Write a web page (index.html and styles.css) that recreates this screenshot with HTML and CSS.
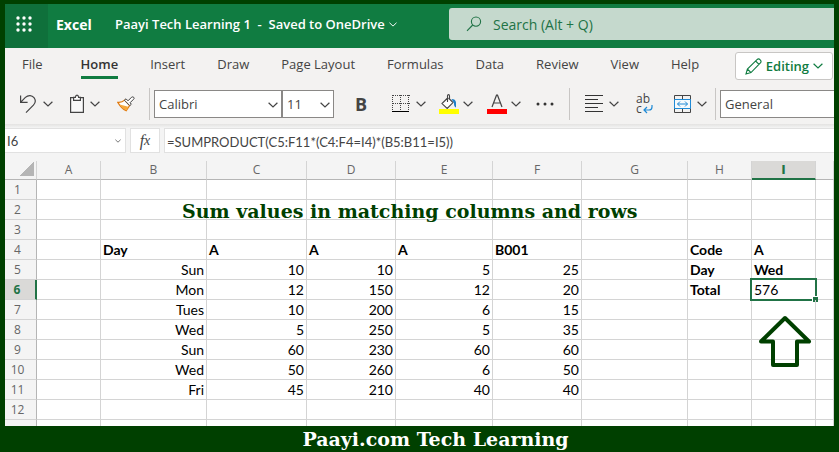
FILE: index.html
```
<!DOCTYPE html>
<html lang="en">
<head>
  <meta charset="UTF-8" />
  <meta name="viewport" content="width=device-width, initial-scale=1.0"/>
  <title>Paayi Tech Learning 1 - Excel</title>
  <link rel="stylesheet" href="styles.css">
</head>
<body>

  <svg class="defs" width="0" height="0">
    <symbol id="chevron" viewBox="0 0 10 6">
      <path d="M.6 .8 5 5 9.4 .8" fill="none" stroke="currentColor" stroke-width="1.2"/>
    </symbol>
  </svg>

  <main class="app">
    <header class="topbar">
      <button class="launcher" aria-label="App launcher">
        <svg width="18" height="18" viewBox="0 0 18 18" fill="#fff">
          <circle cx="3" cy="3" r="1.7"/><circle cx="9" cy="3" r="1.7"/><circle cx="15" cy="3" r="1.7"/>
          <circle cx="3" cy="9" r="1.7"/><circle cx="9" cy="9" r="1.7"/><circle cx="15" cy="9" r="1.7"/>
          <circle cx="3" cy="15" r="1.7"/><circle cx="9" cy="15" r="1.7"/><circle cx="15" cy="15" r="1.7"/>
        </svg>
      </button>
      <span class="brand">Excel</span>
      <button class="doc-name">Paayi Tech Learning 1 &nbsp;-&nbsp; Saved to OneDrive <svg class="chev small"><use href="#chevron"/></svg></button>
      <label class="search">
        <svg width="16" height="16" viewBox="0 0 16 16" fill="none" stroke="#217346" stroke-width="1.1">
          <circle cx="10" cy="5.6" r="4.6"/><path d="M6.7 9 1 14.8"/>
        </svg>
        <input type="text" placeholder="Search (Alt + Q)" aria-label="Search">
      </label>
    </header>

    <nav class="tabs">
      <button class="tab file">File</button>
      <button class="tab active">Home</button>
      <button class="tab">Insert</button>
      <button class="tab">Draw</button>
      <button class="tab">Page Layout</button>
      <button class="tab">Formulas</button>
      <button class="tab">Data</button>
      <button class="tab">Review</button>
      <button class="tab">View</button>
      <button class="tab">Help</button>
      <button class="editing">
        <svg width="17" height="17" viewBox="0 0 17 17" fill="none" stroke="#107c41" stroke-width="1.1">
          <path d="M1 16 2.4 11 12 1.6Q13.6.2 15.2 1.8 16.8 3.4 15.4 5L6 14.6ZM2.4 11 6 14.6M10.6 3 14 6.4"/>
        </svg>
        Editing
        <svg class="chev"><use href="#chevron"/></svg>
      </button>
    </nav>

    <div class="toolbar">
      <button class="tool undo" aria-label="Undo">
        <svg width="18" height="20" viewBox="0 0 18 20" fill="none" stroke="#444" stroke-width="1.2">
          <path d="M1.6 1.5V8.4H8.6M1.8 8.2 6.4 3.4C9.4.6 13 1.2 15 3.6 17 6.2 16.4 9 14.4 11.2L7 18.6"/>
        </svg>
        <svg class="chev"><use href="#chevron"/></svg>
      </button>
      <button class="tool paste" aria-label="Paste">
        <svg width="14" height="20" viewBox="0 0 14 20" fill="none" stroke="#444" stroke-width="1.2">
          <path d="M3.5 3.6H.6V18.4H13.4V3.6H10.5" fill="#fafafa"/>
          <path d="M3.6 6.4V3.4H5.4Q5.6 1.2 7 1.2T8.6 3.4H10.4V6.4Z" fill="#fff"/>
        </svg>
        <svg class="chev"><use href="#chevron"/></svg>
      </button>
      <button class="tool brush" aria-label="Format painter">
        <svg width="18" height="16" viewBox="0 0 18 16">
          <path d="M.8 6.4Q5 6.8 7.6 4.2L12.6 9.6 9.2 14.8Q4.4 12.4.8 6.4Z" fill="#fff" stroke="#e07a10" stroke-width="1.2"/>
          <path d="M2.6 8.6 11.4 10.8 9.2 14.6Q5 12.6 2.6 8.6Z" fill="#f6a93b"/>
          <path d="M7.4 4.2 9 2.8 11 4.8 14.6 1.2Q16 .4 16.8 1.4T16.6 3.2L13 6.8 14.4 8.2 12.8 9.6Z" fill="#fff" stroke="#444"/>
        </svg>
      </button>
      <span class="divider"></span>
      <span class="combo font">
        <select aria-label="Font"><option>Calibri</option><option>Arial</option></select>
        <svg class="chev"><use href="#chevron"/></svg>
      </span>
      <span class="combo size">
        <select aria-label="Font size"><option>11</option><option>12</option></select>
        <svg class="chev"><use href="#chevron"/></svg>
      </span>
      <button class="tool bold">B</button>
      <button class="tool borders" aria-label="Borders">
        <svg width="18" height="18" viewBox="0 0 18 18" fill="none" stroke="#444">
          <path d="M1 .5H18M1 8.5H18M.5 0V16M8.5 0V16M16.5 0V16" stroke-dasharray="1 1"/>
          <path d="M0 16.5H17" stroke="#000"/>
        </svg>
        <svg class="chev"><use href="#chevron"/></svg>
      </button>
      <button class="tool fill" aria-label="Fill color">
        <svg width="20" height="20" viewBox="0 0 20 20" fill="none">
          <path d="M8.6 4 3 9.6 8.2 14.4 14 8.6 9.5 4M8.5 8V2Q8.5.6 9.5.6T10.5 2V5" fill="#fff" stroke="#444" stroke-width="1.1"/>
          <path d="M12.4 5Q16.6 5 17 8.4V13.6Q14.8 12.6 15 9Z" fill="#1e7fc8"/>
          <path d="M0 15H20V20H0Z" fill="#ff0"/>
        </svg>
        <svg class="chev"><use href="#chevron"/></svg>
      </button>
      <button class="tool color" aria-label="Font color">
        <svg width="20" height="20" viewBox="0 0 20 20" fill="none">
          <path d="M5 13 9.5 1.2H10.5L15 13M6.6 9H13.4" stroke="#444" stroke-width="1.2"/>
          <path d="M0 15H20V20H0Z" fill="red"/>
        </svg>
        <svg class="chev"><use href="#chevron"/></svg>
      </button>
      <button class="tool more" aria-label="More font options">
        <svg width="18" height="4" viewBox="0 0 18 4" fill="#333"><circle cx="2" cy="2" r="1.5"/><circle cx="9" cy="2" r="1.5"/><circle cx="16" cy="2" r="1.5"/></svg>
      </button>
      <span class="divider"></span>
      <button class="tool align" aria-label="Alignment">
        <svg width="18" height="18" viewBox="0 0 18 18" stroke="#333">
          <path d="M0 .5H18M0 4.5H13M0 8.5H18M0 12.5H13M0 16.5H18"/>
        </svg>
        <svg class="chev"><use href="#chevron"/></svg>
      </button>
      <button class="tool wrap" aria-label="Wrap text">
        <span>ab</span>
        <span class="wrap-line">c
          <svg width="10" height="9" viewBox="0 0 10 9" fill="none" stroke="#1e8ad6" stroke-width="1.2"><path d="M9 0V2Q9 5 6 5H1M4 2 1 5 4 8"/></svg>
        </span>
      </button>
      <button class="tool merge" aria-label="Merge">
        <svg width="17" height="18" viewBox="0 0 17 18" fill="none" stroke="#444">
          <path d="M.5 .5H16.5V17.5H.5ZM8.5 1V4M8.5 14V17"/>
          <path d="M.5 4.500H16.5V13.5H.5ZM3.5 9H13.5M6 6.5 3.5 9 6 11.5M11 6.5 13.5 9 11 11.5" stroke="#1e8ad6" fill="#f5fafd"/>
        </svg>
        <svg class="chev"><use href="#chevron"/></svg>
      </button>
      <span class="divider"></span>
      <span class="combo format">
        <select aria-label="Number format"><option>General</option><option>Number</option></select>
      </span>
    </div>

    <div class="formula-bar">
      <div class="name-box">
        <input type="text" value="I6" aria-label="Name box">
        <svg class="chev small"><use href="#chevron"/></svg>
      </div>
      <button class="fx" aria-label="Insert function"><i>f</i><i class="x">x</i></button>
      <input class="formula" type="text" value="=SUMPRODUCT(C5:F11*(C4:F4=I4)*(B5:B11=I5))" aria-label="Formula">
    </div>

    <div class="sheet">
      <table>
        <colgroup>
          <col class="w32"><col class="w64"><col class="w106"><col class="w100"><col class="w89"><col class="w97"><col class="w89"><col class="w106"><col class="w64"><col class="w64"><col>
        </colgroup>
        <thead>
          <tr><th class="corner"></th><th>A</th><th>B</th><th>C</th><th>D</th><th>E</th><th>F</th><th>G</th><th>H</th><th class="selected">I</th><th></th></tr>
        </thead>
        <tbody>
          <tr><th>1</th><td></td><td></td><td></td><td></td><td></td><td></td><td></td><td></td><td></td><td></td></tr>
          <tr><th>2</th><td></td><td></td><td></td><td></td><td></td><td></td><td></td><td></td><td></td><td></td></tr>
          <tr><th>3</th><td></td><td></td><td></td><td></td><td></td><td></td><td></td><td></td><td></td><td></td></tr>
          <tr><th>4</th><td></td><td class="label">Day</td><td class="label">A</td><td class="label">A</td><td class="label">A</td><td class="label">B001</td><td></td><td class="label">Code</td><td class="label">A</td><td></td></tr>
          <tr><th>5</th><td></td><td>Sun</td><td>10</td><td>10</td><td>5</td><td>25</td><td></td><td class="label">Day</td><td class="label">Wed</td><td></td></tr>
          <tr><th class="selected">6</th><td></td><td>Mon</td><td>12</td><td>150</td><td>12</td><td>20</td><td></td><td class="label">Total</td><td class="current">576</td><td></td></tr>
          <tr><th>7</th><td></td><td>Tues</td><td>10</td><td>200</td><td>6</td><td>15</td><td></td><td></td><td class="pointed"><svg class="arrow" width="54" height="54" viewBox="0 0 54 54" fill="none" stroke="#004000" stroke-width="4" stroke-linejoin="round"><path d="M27 3 51 26.5H39V50H15V26.5H3Z"/></svg></td><td></td></tr>
          <tr><th>8</th><td></td><td>Wed</td><td>5</td><td>250</td><td>5</td><td>35</td><td></td><td></td><td></td><td></td></tr>
          <tr><th>9</th><td></td><td>Sun</td><td>60</td><td>230</td><td>60</td><td>60</td><td></td><td></td><td></td><td></td></tr>
          <tr><th>10</th><td></td><td>Wed</td><td>50</td><td>260</td><td>6</td><td>50</td><td></td><td></td><td></td><td></td></tr>
          <tr><th>11</th><td></td><td>Fri</td><td>45</td><td>210</td><td>40</td><td>40</td><td></td><td></td><td></td><td></td></tr>
          <tr><th>12</th><td></td><td></td><td></td><td></td><td></td><td></td><td></td><td></td><td></td><td></td></tr>
          <tr><th></th><td></td><td></td><td></td><td></td><td></td><td></td><td></td><td></td><td></td><td></td></tr>
        </tbody>
      </table>
      <h1 class="caption">Sum values in matching columns and rows</h1>
    </div>
  </main>

  <footer class="footer">Paayi.com Tech Learning</footer>

</body>
</html>
```
FILE: styles.css
```
* {
  box-sizing: border-box;
}
body {
  margin: 0;
  height: 100vh;
  display: flex;
  flex-direction: column;
  padding: 4px 5px 0;
  background: #004000;
  font-family: 'Open Sans', 'Noto Sans', sans-serif;
  font-size: 13px;
  color: #444;
  overflow: hidden;
}
button, input, select {
  font: inherit;
  color: inherit;
  margin: 0;
  padding: 0;
  border: none;
  border-radius: 0;
  background: none;
}
button {
  display: flex;
  align-items: center;
  flex-shrink: 0;
  white-space: nowrap;
  cursor: pointer;
}
svg {
  display: block;
  flex-shrink: 0;
}
.defs {
  position: absolute;
}
.chev {
  width: 10px;
  height: 6px;
}
.chev.small {
  width: 8px;
  height: 5px;
}

.app {
  flex: 1;
  min-height: 0;
  display: flex;
  flex-direction: column;
  overflow: hidden;
  background: #f3f2f1;
}

/* top bar */
.topbar {
  display: flex;
  align-items: center;
  flex-shrink: 0;
  height: 44px;
  background: #107c41;
  color: #fff;
}
.launcher {
  justify-content: center;
  width: 43px;
  height: 44px;
  padding: 0 6px 4px 0;
  background: #0f703b;
}
.brand {
  margin-left: 8px;
  width: 59px;
  padding-bottom: 4px;
  font-size: 14px;
  font-weight: 700;
}
.doc-name {
  gap: 4px;
  width: 334px;
  padding-bottom: 4px;
  font-weight: 600;
}
.search {
  display: flex;
  align-items: center;
  flex: 1;
  gap: 11px;
  height: 32px;
  margin-bottom: 4px;
  padding-left: 17px;
  border-radius: 3px 0 0 3px;
  background: #c5d9cd;
  font-size: 14px;
}
.search input {
  flex: 1;
  min-width: 0;
}
.search input::placeholder {
  color: #217346;
  opacity: 1;
}

/* ribbon tabs */
.tabs {
  display: flex;
  align-items: flex-start;
  flex-shrink: 0;
  gap: 32px;
  height: 38px;
  padding: 4px 1px 0 17px;
}
.tab {
  height: 27px;
  border-bottom: 3px solid transparent;
}
.tab.file {
  margin-right: 6px;
}
.tab.active {
  border-color: #107c41;
  font-weight: 600;
  color: #333;
}
.editing {
  gap: 4px;
  height: 28px;
  margin-left: auto;
  padding: 0 9px;
  border: 1px solid #c8c6c4;
  border-radius: 3px;
  background: #fff;
  color: #107c41;
  font-weight: 600;
}

/* ribbon tools */
.toolbar {
  display: flex;
  align-items: center;
  flex-shrink: 0;
  height: 38px;
  padding: 0 0 2px 14px;
  overflow: hidden;
}
.tool {
  gap: 6px;
  height: 28px;
}
.paste {
  margin-left: 17px;
}
.brush {
  margin: 0 14px 0 17px;
}
.divider {
  flex-shrink: 0;
  width: 1px;
  height: 32px;
  background: #c8c6c4;
}
.combo {
  position: relative;
  display: block;
  flex-shrink: 0;
  height: 28px;
  border: 1px solid #8a8886;
  background: #fff;
}
.combo select {
  width: 100%;
  height: 100%;
  padding-left: 4px;
  appearance: none;
}
.combo .chev {
  position: absolute;
  right: 3px;
  top: 11px;
  pointer-events: none;
}
.font {
  width: 128px;
  margin-left: 4px;
}
.size {
  width: 52px;
}
.bold {
  margin: 0 25px 0 21px;
  font-size: 18px;
  font-weight: 700;
}
.fill {
  margin: 0 14px 0 13px;
}
.fill, .color {
  gap: 4px;
}
.more {
  margin: 0 15px;
}
.align {
  margin-left: 15px;
}
.wrap {
  flex-direction: column;
  align-items: flex-start;
  justify-content: center;
  gap: 0;
  width: 18px;
  margin: 0 20px 0 17px;
  font-size: 12px;
  line-height: 10px;
}
.wrap-line {
  display: flex;
  align-items: center;
  gap: 1px;
}
.merge {
  margin-right: 8px;
}
.format {
  width: 128px;
  margin-left: 4px;
}

/* formula bar */
.formula-bar {
  display: flex;
  align-items: stretch;
  flex-shrink: 0;
  gap: 4px;
  height: 37px;
  padding: 4px 0 8px;
  background: linear-gradient(#e3e2e1, #f4f4f4 4px);
  font-family: Lato, sans-serif;
  font-size: 13px;
}
.name-box {
  display: flex;
  align-items: center;
  width: 121px;
  padding-right: 4px;
  border: 1px solid #e1e1e1;
  border-left: none;
  background: #fff;
}
.name-box input {
  flex: 1;
  min-width: 0;
  padding-left: 2px;
}
.name-box .chev {
  width: 6px;
  height: 4px;
}
.fx {
  justify-content: center;
  width: 30px;
  border: 1px solid #e1e1e1;
  background: #fff;
  font-family: 'Liberation Serif', serif;
  font-size: 16px;
}
.fx .x {
  font-size: 14px;
}
.formula {
  flex: 1;
  min-width: 0;
  padding: 2px 0 0 2px;
  border: 1px solid #e1e1e1;
  border-right: none;
  background: #fff;
}

/* sheet */
.sheet {
  position: relative;
  flex: 1;
  min-height: 0;
  overflow: hidden;
  background: #fff;
}
table {
  width: 100%;
  table-layout: fixed;
  border-collapse: separate;
  border-spacing: 0;
}
.w32 { width: 32px; }
.w64 { width: 64px; }
.w89 { width: 89px; }
.w97 { width: 97px; }
.w100 { width: 100px; }
.w106 { width: 106px; }
th, td {
  height: 20px;
  padding: 0 2px;
  border-right: 1px solid #d4d4d4;
  border-bottom: 1px solid #d4d4d4;
  font-size: 13px;
  line-height: 16px;
}
td {
  font-family: Lato, sans-serif;
  font-size: 14px;
  color: #000;
  text-align: right;
}
th {
  background: #f4f4f4;
  font-size: 12px;
  font-weight: 400;
  color: #666;
}
thead th {
  height: 19px;
  border-bottom-color: #b5b5b5;
}
tbody th {
  padding-right: 8px;
  border-right-color: #b5b5b5;
}
.corner {
  background: linear-gradient(135deg, transparent 50%, #b5b5b5 50%) no-repeat 15px 1px / 14px 14px #f4f4f4;
}
th.selected {
  background: #dad9d7;
  color: #217346;
  font-weight: 700;
}
thead .selected {
  border-bottom: 2px solid #217346;
  font-family: 'DejaVu Sans', sans-serif;
}
tbody .selected {
  border-right: 2px solid #217346;
}
.label {
  font-weight: 700;
  text-align: left;
}
.current, .pointed {
  position: relative;
}
.current {
  text-align: left;
}
/* selection frame and its fill handle */
.current::before {
  content: '';
  position: absolute;
  inset: -2px;
  border: 2px solid #217346;
}
.current::after {
  content: '';
  position: absolute;
  right: -3px;
  bottom: -3px;
  width: 5px;
  height: 5px;
  border: 1px solid #fff;
  border-width: 1px 0 0 1px;
  background: #217346;
}
.arrow {
  position: absolute;
  left: 6px;
  top: 15px;
}
.caption {
  position: absolute;
  left: 177px;
  top: 40px;
  margin: 0;
  font-family: 'DejaVu Serif', serif;
  font-size: 19px;
  line-height: 20px;
  color: #004000;
  white-space: nowrap;
}

.footer {
  flex-shrink: 0;
  height: 26px;
  padding-left: 32px;
  font-family: 'DejaVu Serif', serif;
  font-size: 19px;
  font-weight: 700;
  line-height: 26px;
  text-align: center;
  color: #fff;
}
```
